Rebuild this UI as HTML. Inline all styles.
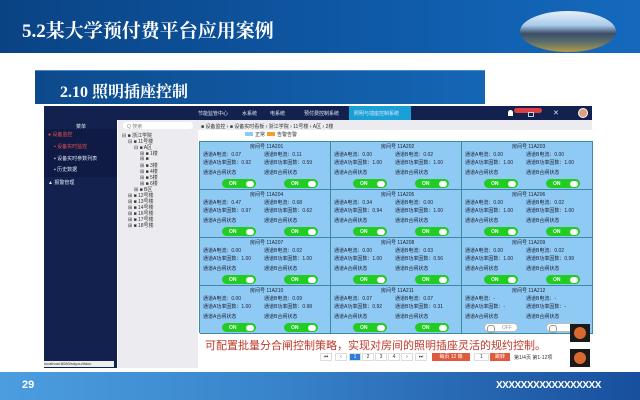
<!DOCTYPE html>
<html><head><meta charset="utf-8"><style>
*{margin:0;padding:0;box-sizing:border-box}
body{width:640px;height:400px;position:relative;background:#fff;font-family:"Liberation Sans","Noto Sans CJK SC",sans-serif;overflow:hidden}
.abs{position:absolute}
#hdr{left:0;top:0;width:640px;height:53px;background:linear-gradient(90deg,#0a4384,#0f5aa8 60%,#1569bd)}
#hdr h1{position:absolute;left:22px;top:16px;color:#fff;font-size:19px;font-weight:bold;font-family:"Liberation Serif","Noto Serif CJK SC",serif}
#img{left:520px;top:11px;width:96px;height:41px;border-radius:50%;background:linear-gradient(180deg,#e8f0f8 0%,#a8cbea 35%,#3b4d6a 55%,#5a6d6a 75%,#b29a4a 100%);overflow:hidden}
#sub{left:35px;top:70px;width:450px;height:34px;background:linear-gradient(90deg,#0d4a8c,#1466b5);border-top:1px solid #4a8ad0}
#sub h2{position:absolute;left:25px;top:8px;color:#fff;font-size:16px;font-weight:bold;font-family:"Liberation Serif","Noto Serif CJK SC",serif}
#nav{left:44px;top:106px;width:548px;height:14px;background:#13214f;overflow:hidden}
#side{left:44px;top:120px;width:73px;height:248px;background:#13214f}
#tree{left:118px;top:120px;width:80px;height:248px;background:#ececf0}
.t{font-size:5px;color:#333;position:absolute;white-space:nowrap}
.w{color:#dfe6f5}
.cell{position:absolute;width:131px;height:48px;background:#8fcaf5;border-right:1px solid #3a8aa0;border-bottom:1px solid #3a8aa0}
.cell .t{color:#223}
.on{position:absolute;width:34px;height:9px;border-radius:5px;background:#22cc22}
.on:after{content:"";position:absolute;right:2px;top:1.5px;width:8px;height:6px;border-radius:3px;background:#fff}
.on b{position:absolute;left:7px;top:1.5px;font-size:5px;color:#fff}
.off{position:absolute;width:34px;height:9px;border-radius:5px;background:#fff;border:1px solid #bbb}
.off:before{content:"";position:absolute;left:2px;top:1px;width:6px;height:6px;border-radius:3px;border:1px solid #999}
#foot{left:0;top:372px;width:640px;height:28px;background:linear-gradient(90deg,#4c9de0,#3a86cc 40%,#184f9e)}
.pg{position:absolute;top:353px;height:8px;background:#fff;border:1px solid #ddd;font-size:5px;color:#336;text-align:center;line-height:7px}
</style></head><body>
<div id="hdr" class="abs"><h1>5.2某大学预付费平台应用案例</h1></div>
<div id="img" class="abs"></div>
<div id="sub" class="abs"><h2>2.10 照明插座控制</h2></div>

<div id="nav" class="abs">
<span class="t w" style="left:154px;top:4px">节能监管中心</span>
<span class="t w" style="left:198px;top:4px">水系统</span>
<span class="t w" style="left:226px;top:4px">电系统</span>
<span class="t w" style="left:260px;top:4px">预付费控制系统</span>
<div class="abs" style="left:305px;top:0;width:62px;height:14px;background:#1aa0d8"><span class="t w" style="left:5px;top:4px">照明与插座控制系统</span></div>
<div class="abs" style="left:464px;top:4px;width:5px;height:6px;background:#fff;border-radius:3px 3px 0 0"></div>
<div class="abs" style="left:470px;top:2px;width:28px;height:5px;background:#e04040;border-radius:3px"></div>
<div class="abs" style="left:484px;top:6px;width:6px;height:5px;border:1px solid #ccd"></div>
<span class="t w" style="left:509px;top:3px;font-size:7px">✕</span>
<div class="abs" style="left:534px;top:2px;width:10px;height:10px;background:#e0a080;border-radius:50%;border:1px solid #fff"></div>
</div>
<div id="side" class="abs">
<span class="t w" style="left:32px;top:3px">菜单</span>
<div class="abs" style="left:0;top:9px;width:73px;height:48px;background:#0f1b44"></div>
<span class="t" style="left:4px;top:11px;color:#e85050">● 设备监控</span>
<span class="t" style="left:10px;top:23px;color:#e85050">▪ 设备实时监控</span>
<span class="t w" style="left:10px;top:35px">▪ 设备实时参数列表</span>
<span class="t w" style="left:10px;top:46px">▪ 历史数据</span>
<span class="t w" style="left:4px;top:59px">▲ 报警管理</span>
</div>
<div class="abs" style="left:44px;top:361px;width:70px;height:6px;background:#eee;font-size:4px;color:#333">localhost:8080/sdyou/#doc</div>
<div id="tree" class="abs">
<div class="abs" style="left:5px;top:2px;width:70px;height:7px;background:#fff;border-radius:4px"><span class="t" style="left:4px;top:1px;color:#888">Q 搜索</span></div>
<span class="t" style="left:4px;top:12px">⊟ ■ 浙江学院</span>
<span class="t" style="left:10px;top:18px">⊟ ■ 11号楼</span>
<span class="t" style="left:16px;top:24px">⊟ ■ A区</span>
<span class="t" style="left:22px;top:30px">⊞ ■ 1楼</span>
<span class="t" style="left:22px;top:36px">⊞ ■</span>
<span class="t" style="left:22px;top:42px">⊞ ■ 3楼</span>
<span class="t" style="left:22px;top:48px">⊞ ■ 4楼</span>
<span class="t" style="left:22px;top:54px">⊞ ■ 5楼</span>
<span class="t" style="left:22px;top:60px">⊞ ■ 6楼</span>
<span class="t" style="left:16px;top:66px">⊞ ■ B区</span>
<span class="t" style="left:10px;top:72px">⊞ ■ 12号楼</span>
<span class="t" style="left:10px;top:78px">⊞ ■ 13号楼</span>
<span class="t" style="left:10px;top:84px">⊞ ■ 14号楼</span>
<span class="t" style="left:10px;top:90px">⊞ ■ 16号楼</span>
<span class="t" style="left:10px;top:96px">⊞ ■ 17号楼</span>
<span class="t" style="left:10px;top:102px">⊞ ■ 18号楼</span>
</div>
<div class="abs" style="left:198px;top:120px;width:394px;height:10px;background:#ececf0"><span class="t" style="left:3px;top:3px">■ 设备监控 › ■ 设备实时看板 › 浙江学院 › 11号楼 › A区 › 2楼</span></div>
<div class="abs" style="left:198px;top:130px;width:394px;height:238px;background:#fff"></div>
<div class="abs" style="left:245px;top:132px;width:8px;height:4px;background:#8fcaf5"></div><span class="t" style="left:255px;top:131px">正常</span>
<div class="abs" style="left:267px;top:132px;width:8px;height:4px;background:#f0a030"></div><span class="t" style="left:277px;top:131px">告警告警</span>

<div class="abs" style="left:199px;top:141px;width:394px;height:192px;border-left:1px solid #3a8aa0;border-top:1px solid #3a8aa0">
<div class="cell" style="left:0;top:0"><span class="t" style="left:50px;top:1px">房间号 11A201</span><span class="t" style="left:3px;top:9px">通道A电流：0.07</span><span class="t" style="left:64px;top:9px">通道B电流：0.11</span><span class="t" style="left:3px;top:17px">通道A功率因数：0.92</span><span class="t" style="left:64px;top:17px">通道B功率因数：0.59</span><span class="t" style="left:3px;top:27px">通道A合闸状态</span><span class="t" style="left:64px;top:27px">通道B合闸状态</span><div class="on" style="left:22px;top:37px"><b>ON</b></div><div class="on" style="left:84px;top:37px"><b>ON</b></div></div>
<div class="cell" style="left:131px;top:0"><span class="t" style="left:50px;top:1px">房间号 11A202</span><span class="t" style="left:3px;top:9px">通道A电流：0.00</span><span class="t" style="left:64px;top:9px">通道B电流：0.02</span><span class="t" style="left:3px;top:17px">通道A功率因数：1.00</span><span class="t" style="left:64px;top:17px">通道B功率因数：1.00</span><span class="t" style="left:3px;top:27px">通道A合闸状态</span><span class="t" style="left:64px;top:27px">通道B合闸状态</span><div class="on" style="left:22px;top:37px"><b>ON</b></div><div class="on" style="left:84px;top:37px"><b>ON</b></div></div>
<div class="cell" style="left:262px;top:0"><span class="t" style="left:50px;top:1px">房间号 11A203</span><span class="t" style="left:3px;top:9px">通道A电流：0.00</span><span class="t" style="left:64px;top:9px">通道B电流：0.00</span><span class="t" style="left:3px;top:17px">通道A功率因数：1.00</span><span class="t" style="left:64px;top:17px">通道B功率因数：1.00</span><span class="t" style="left:3px;top:27px">通道A合闸状态</span><span class="t" style="left:64px;top:27px">通道B合闸状态</span><div class="on" style="left:22px;top:37px"><b>ON</b></div><div class="on" style="left:84px;top:37px"><b>ON</b></div></div>
<div class="cell" style="left:0;top:48px"><span class="t" style="left:50px;top:1px">房间号 11A204</span><span class="t" style="left:3px;top:9px">通道A电流：0.47</span><span class="t" style="left:64px;top:9px">通道B电流：0.68</span><span class="t" style="left:3px;top:17px">通道A功率因数：0.97</span><span class="t" style="left:64px;top:17px">通道B功率因数：0.62</span><span class="t" style="left:3px;top:27px">通道A合闸状态</span><span class="t" style="left:64px;top:27px">通道B合闸状态</span><div class="on" style="left:22px;top:37px"><b>ON</b></div><div class="on" style="left:84px;top:37px"><b>ON</b></div></div>
<div class="cell" style="left:131px;top:48px"><span class="t" style="left:50px;top:1px">房间号 11A205</span><span class="t" style="left:3px;top:9px">通道A电流：0.34</span><span class="t" style="left:64px;top:9px">通道B电流：0.00</span><span class="t" style="left:3px;top:17px">通道A功率因数：0.94</span><span class="t" style="left:64px;top:17px">通道B功率因数：1.00</span><span class="t" style="left:3px;top:27px">通道A合闸状态</span><span class="t" style="left:64px;top:27px">通道B合闸状态</span><div class="on" style="left:22px;top:37px"><b>ON</b></div><div class="on" style="left:84px;top:37px"><b>ON</b></div></div>
<div class="cell" style="left:262px;top:48px"><span class="t" style="left:50px;top:1px">房间号 11A206</span><span class="t" style="left:3px;top:9px">通道A电流：0.00</span><span class="t" style="left:64px;top:9px">通道B电流：0.02</span><span class="t" style="left:3px;top:17px">通道A功率因数：1.00</span><span class="t" style="left:64px;top:17px">通道B功率因数：1.00</span><span class="t" style="left:3px;top:27px">通道A合闸状态</span><span class="t" style="left:64px;top:27px">通道B合闸状态</span><div class="on" style="left:22px;top:37px"><b>ON</b></div><div class="on" style="left:84px;top:37px"><b>ON</b></div></div>
<div class="cell" style="left:0;top:96px"><span class="t" style="left:50px;top:1px">房间号 11A207</span><span class="t" style="left:3px;top:9px">通道A电流：0.00</span><span class="t" style="left:64px;top:9px">通道B电流：0.02</span><span class="t" style="left:3px;top:17px">通道A功率因数：1.00</span><span class="t" style="left:64px;top:17px">通道B功率因数：1.00</span><span class="t" style="left:3px;top:27px">通道A合闸状态</span><span class="t" style="left:64px;top:27px">通道B合闸状态</span><div class="on" style="left:22px;top:37px"><b>ON</b></div><div class="on" style="left:84px;top:37px"><b>ON</b></div></div>
<div class="cell" style="left:131px;top:96px"><span class="t" style="left:50px;top:1px">房间号 11A208</span><span class="t" style="left:3px;top:9px">通道A电流：0.00</span><span class="t" style="left:64px;top:9px">通道B电流：0.03</span><span class="t" style="left:3px;top:17px">通道A功率因数：1.00</span><span class="t" style="left:64px;top:17px">通道B功率因数：0.56</span><span class="t" style="left:3px;top:27px">通道A合闸状态</span><span class="t" style="left:64px;top:27px">通道B合闸状态</span><div class="on" style="left:22px;top:37px"><b>ON</b></div><div class="on" style="left:84px;top:37px"><b>ON</b></div></div>
<div class="cell" style="left:262px;top:96px"><span class="t" style="left:50px;top:1px">房间号 11A209</span><span class="t" style="left:3px;top:9px">通道A电流：0.00</span><span class="t" style="left:64px;top:9px">通道B电流：0.02</span><span class="t" style="left:3px;top:17px">通道A功率因数：1.00</span><span class="t" style="left:64px;top:17px">通道B功率因数：0.99</span><span class="t" style="left:3px;top:27px">通道A合闸状态</span><span class="t" style="left:64px;top:27px">通道B合闸状态</span><div class="on" style="left:22px;top:37px"><b>ON</b></div><div class="on" style="left:84px;top:37px"><b>ON</b></div></div>
<div class="cell" style="left:0;top:144px"><span class="t" style="left:50px;top:1px">房间号 11A210</span><span class="t" style="left:3px;top:9px">通道A电流：0.00</span><span class="t" style="left:64px;top:9px">通道B电流：0.09</span><span class="t" style="left:3px;top:17px">通道A功率因数：1.00</span><span class="t" style="left:64px;top:17px">通道B功率因数：0.98</span><span class="t" style="left:3px;top:27px">通道A合闸状态</span><span class="t" style="left:64px;top:27px">通道B合闸状态</span><div class="on" style="left:22px;top:37px"><b>ON</b></div><div class="on" style="left:84px;top:37px"><b>ON</b></div></div>
<div class="cell" style="left:131px;top:144px"><span class="t" style="left:50px;top:1px">房间号 11A211</span><span class="t" style="left:3px;top:9px">通道A电流：0.07</span><span class="t" style="left:64px;top:9px">通道B电流：0.07</span><span class="t" style="left:3px;top:17px">通道A功率因数：0.92</span><span class="t" style="left:64px;top:17px">通道B功率因数：0.31</span><span class="t" style="left:3px;top:27px">通道A合闸状态</span><span class="t" style="left:64px;top:27px">通道B合闸状态</span><div class="on" style="left:22px;top:37px"><b>ON</b></div><div class="on" style="left:84px;top:37px"><b>ON</b></div></div>
<div class="cell" style="left:262px;top:144px"><span class="t" style="left:50px;top:1px">房间号 11A212</span><span class="t" style="left:3px;top:9px">通道A电流：-</span><span class="t" style="left:64px;top:9px">通道B电流：-</span><span class="t" style="left:3px;top:17px">通道A功率因数：-</span><span class="t" style="left:64px;top:17px">通道B功率因数：-</span><span class="t" style="left:3px;top:27px">通道A合闸状态</span><span class="t" style="left:64px;top:27px">通道B合闸状态</span><div class="off" style="left:22px;top:37px"><span class="t" style="left:17px;top:1px;color:#999">OFF</span></div><div class="off" style="left:84px;top:37px"></div></div>
</div>

<div class="abs" style="left:205px;top:337px;font-size:11px;color:#c0392b;white-space:nowrap;font-family:'Liberation Sans','Noto Sans CJK SC',sans-serif">可配置批量分合闸控制策略，实现对房间的照明插座灵活的规约控制。</div>
<div class="pg" style="left:320px;width:12px">⏮</div>
<div class="pg" style="left:335px;width:12px">‹</div>
<div class="pg" style="left:349px;width:12px;background:#2b7fd8;color:#fff">1</div>
<div class="pg" style="left:362px;width:12px">2</div>
<div class="pg" style="left:375px;width:12px">3</div>
<div class="pg" style="left:388px;width:12px">4</div>
<div class="pg" style="left:401px;width:12px">›</div>
<div class="pg" style="left:415px;width:12px">⏭</div>
<div class="pg" style="left:432px;width:38px;background:#e05a40;color:#fff;border-color:#e05a40">每页 12 條</div>
<div class="pg" style="left:474px;width:15px">1</div>
<div class="pg" style="left:490px;width:20px;background:#e05a40;color:#fff;border-color:#e05a40">跳转</div>
<span class="t" style="left:514px;top:354px">第1/4页 第1-12项</span>
<div class="abs" style="left:570px;top:324px;width:20px;height:18px;background:#1a1a1a"><div class="abs" style="left:4px;top:3px;width:12px;height:12px;border-radius:50%;background:#d86a30"></div></div>
<div class="abs" style="left:570px;top:349px;width:20px;height:18px;background:#1a1a1a"><div class="abs" style="left:4px;top:3px;width:12px;height:12px;border-radius:50%;background:#d86a30"></div></div>

<div id="foot" class="abs">
<span class="abs" style="left:22px;top:7px;color:#fff;font-size:11px;font-weight:bold">29</span>
<span class="abs" style="left:496px;top:8px;color:#fff;font-size:10px;font-weight:bold;letter-spacing:-0.5px">XXXXXXXXXXXXXXXXX</span>
</div>
</body></html>
